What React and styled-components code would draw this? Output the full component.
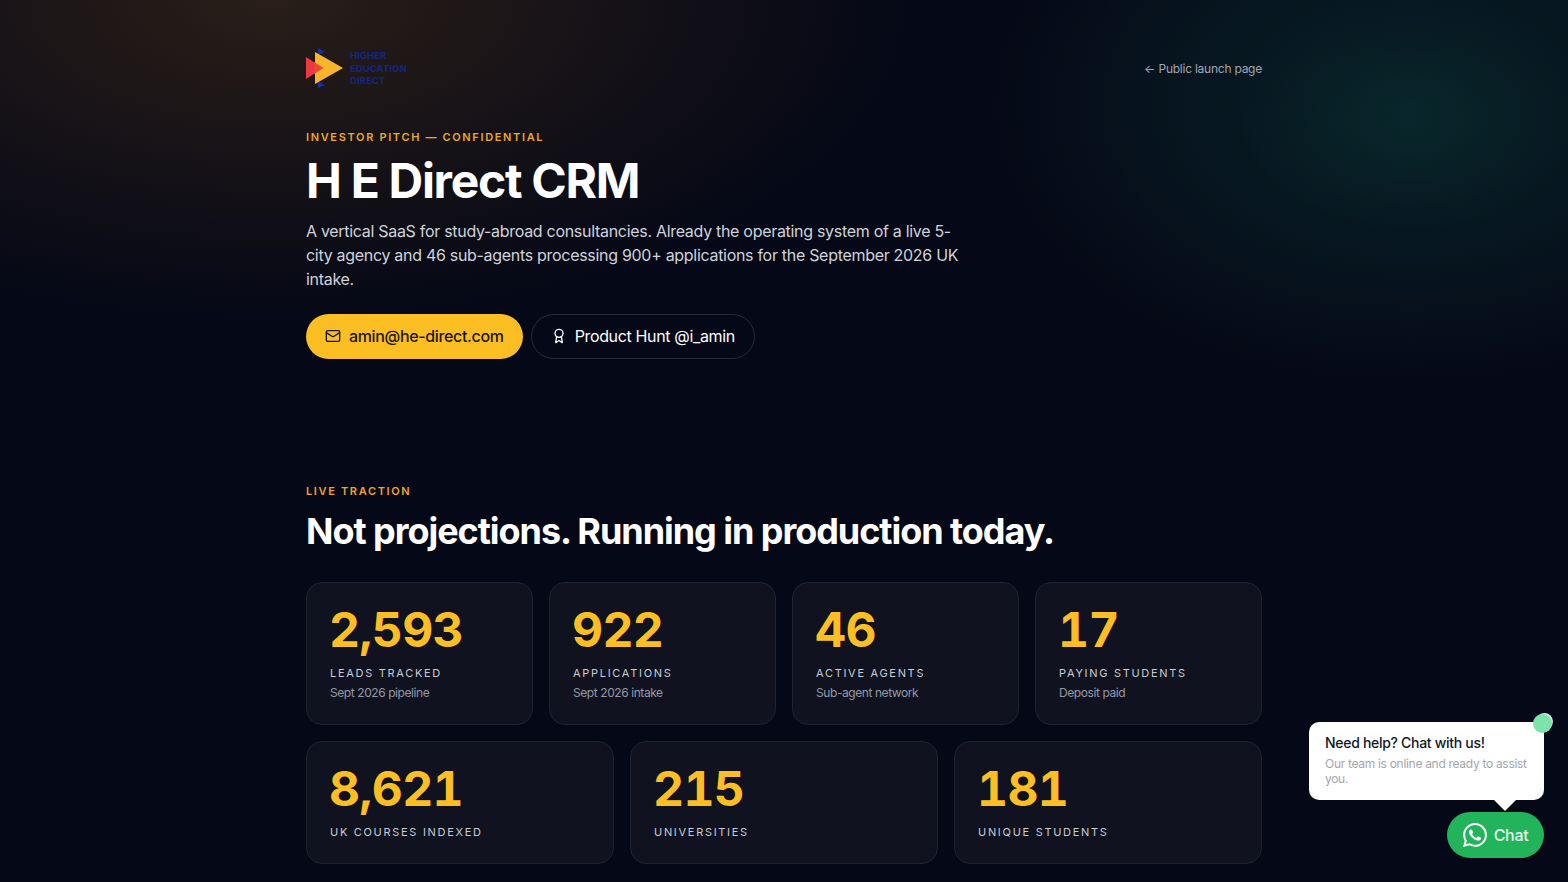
import React from "react";
import styled, { createGlobalStyle } from "styled-components";
import { Mail, Award } from "lucide-react";

const Global = createGlobalStyle`
  html, body { margin: 0; padding: 0; height: 882px; overflow: hidden; background: #050816; }
  * { box-sizing: border-box; }
  body { font-family: Inter, "Liberation Sans", sans-serif; color: #fff; letter-spacing: -0.3px; }
`;

const Page = styled.div`
  position: relative;
  height: 882px;
  overflow: hidden;
  background:
    radial-gradient(ellipse 640px 320px at 270px 0px, rgba(140, 90, 30, 0.27), rgba(140, 90, 30, 0.13) 50%, rgba(140, 90, 30, 0) 100%),
    radial-gradient(ellipse 170px 110px at 1410px 125px, rgba(14, 110, 90, 0.1), rgba(14, 110, 90, 0) 100%),
    radial-gradient(ellipse 430px 285px at 1410px 105px, rgba(16, 105, 90, 0.24), rgba(16, 105, 90, 0.12) 60%, rgba(16, 105, 90, 0) 100%),
    #050816;
`;

const Container = styled.main`
  width: 1020px;
  margin: 0 auto;
  padding: 0 32px;
`;

const Header = styled.header`
  height: 130px;
  padding-top: 48px;
  display: flex;
  justify-content: space-between;
  align-items: flex-start;
`;

const Logo = styled.div`
  display: flex;
  align-items: center;
  gap: 6px;
  height: 40px;
`;

const LogoText = styled.div`
  font-size: 9.6px;
  line-height: 12.5px;
  font-weight: 700;
  letter-spacing: 0;
  color: #14267f;
  white-space: nowrap;
  padding-top: 2px;
`;

const BackLink = styled.a`
  font-size: 12px;
  line-height: 41px;
  letter-spacing: -0.24px;
  color: #a0a6b6;
`;

const Hero = styled.section`
  height: 354px;
`;

const Eyebrow = styled.div`
  font-size: 11px;
  line-height: 14px;
  font-weight: 600;
  letter-spacing: 1.65px;
  color: #eaa928;
`;

const Title = styled.h1`
  margin: 8px 0 0;
  font-size: 48px;
  line-height: 58px;
  font-weight: 700;
  letter-spacing: -1.3px;
  color: #fff;
`;

const Lead = styled.p`
  margin: 9px 0 0;
  width: 656px;
  font-size: 16px;
  line-height: 24px;
  color: #d0d3dc;
`;

const Actions = styled.div`
  display: flex;
  gap: 8px;
  margin-top: 22.5px;
`;

const Button = styled.a`
  display: flex;
  align-items: center;
  gap: 8px;
  height: 45px;
  padding: 0 19px 1px;
  border-radius: 23px;
  font-size: 16px;
  letter-spacing: -0.35px;
  font-weight: ${(p) => (p.$primary ? 500 : 400)};
  color: ${(p) => (p.$primary ? "#1b1508" : "#fff")};
  background: ${(p) => (p.$primary ? "#fbbf24" : "transparent")};
  border: ${(p) => (p.$primary ? "0" : "1px solid #262b3b")};
`;

const SectionLabel = styled.div`
  font-size: 11px;
  line-height: 14px;
  font-weight: 600;
  letter-spacing: 1.65px;
  color: #f0a32a;
`;

const SectionTitle = styled.h2`
  margin: 11px 0 0;
  font-size: 36px;
  line-height: 44px;
  font-weight: 700;
  letter-spacing: -1.05px;
  color: #fff;
`;

const Grid = styled.div`
  display: grid;
  grid-template-columns: repeat(${(p) => p.$cols}, 1fr);
  gap: 16px;
  margin-top: ${(p) => p.$top}px;
`;

const Card = styled.div`
  height: ${(p) => (p.$sub ? 143 : 123)}px;
  padding: 21px 23px 0;
  background: #10131f;
  border: 1px solid #1f2331;
  border-radius: 16px;
`;

const Value = styled.div`
  font-size: 48px;
  line-height: 52px;
  font-weight: 700;
  letter-spacing: -0.6px;
  font-variant-numeric: tabular-nums;
  color: #fbbf24;
  margin-left: -1px;
`;

const Label = styled.div`
  margin-top: 9px;
  font-size: 11px;
  line-height: 16px;
  letter-spacing: 1.7px;
  color: #c9ccd6;
`;

const Sub = styled.div`
  margin-top: 4px;
  font-size: 12px;
  line-height: 16px;
  letter-spacing: -0.42px;
  color: #9498a6;
`;

const Bubble = styled.div`
  position: absolute;
  left: 1309px;
  top: 722px;
  width: 235px;
  height: 78px;
  padding: 12px 16px;
  background: #fff;
  border-radius: 10px;
  &::after {
    content: "";
    position: absolute;
    right: 28px;
    bottom: -11px;
    border-left: 11px solid transparent;
    border-right: 11px solid transparent;
    border-top: 11px solid #fff;
  }
`;

const BubbleTitle = styled.div`
  font-size: 14px;
  line-height: 18px;
  font-weight: 500;
  color: #111827;
`;

const BubbleText = styled.div`
  margin-top: 4px;
  font-size: 12px;
  line-height: 15px;
  color: #a3a6ad;
`;

const Dot = styled.span`
  position: absolute;
  right: -8px;
  top: -8px;
  width: 19px;
  height: 19px;
  border-radius: 50%;
  background: #7ce3ad;
  box-shadow: 2px -2px 0 -1px #d6e6e0;
`;

const ChatButton = styled.a`
  position: absolute;
  left: 1447px;
  top: 812px;
  width: 97px;
  height: 46px;
  display: flex;
  align-items: center;
  justify-content: center;
  gap: 7px;
  background: #22b45b;
  border-radius: 23px;
  font-size: 16px;
  font-weight: 500;
  color: #e6f7ec;
`;

const LogoMark = () => (
  <svg width="38" height="42" viewBox="0 0 38 42" aria-hidden="true">
    <polygon points="12,1 19,5 12,8" fill="#1a2f9f" />
    <polygon points="12,34 19,38 12,41" fill="#1a2f9f" />
    <polygon points="9,5 37,21 9,37" fill="#f9b52c" />
    <polygon points="0,10 17,21 0,32" fill="#ee3844" />
    <polygon points="8,15 17,21 8,27" fill="#ec4a34" />
  </svg>
);

const WhatsApp = () => (
  <svg width="24" height="24" viewBox="0 0 24 24" fill="#fff" aria-hidden="true">
    <path d="M17.47 14.38c-.3-.15-1.76-.87-2.03-.97-.27-.1-.47-.15-.67.15-.2.3-.77.97-.94 1.17-.17.2-.35.22-.65.07-.3-.15-1.26-.46-2.39-1.48-.88-.79-1.48-1.76-1.65-2.06-.17-.3-.02-.46.13-.61.13-.13.3-.35.45-.52.15-.17.2-.3.3-.5.1-.2.05-.37-.02-.52-.08-.15-.67-1.61-.92-2.2-.24-.58-.49-.5-.67-.51h-.57c-.2 0-.52.07-.79.37-.27.3-1.04 1.02-1.04 2.48s1.07 2.88 1.21 3.07c.15.2 2.1 3.2 5.08 4.49.71.3 1.26.49 1.69.62.71.23 1.36.2 1.87.12.57-.08 1.76-.72 2-1.41.25-.7.25-1.29.18-1.41-.08-.13-.27-.2-.57-.35zM12.05 21.78h-.01a9.87 9.87 0 0 1-5.03-1.38l-.36-.21-3.74.98 1-3.65-.24-.37a9.86 9.86 0 0 1-1.51-5.26c0-5.45 4.44-9.88 9.89-9.88 2.64 0 5.12 1.03 6.99 2.9a9.83 9.83 0 0 1 2.89 6.99c0 5.45-4.44 9.88-9.88 9.88zM20.46 3.49A11.82 11.82 0 0 0 12.05 0C5.5 0 .16 5.34.16 11.89c0 2.1.55 4.14 1.59 5.95L.06 24l6.3-1.65a11.88 11.88 0 0 0 5.68 1.45h.01c6.55 0 11.89-5.34 11.89-11.9 0-3.18-1.24-6.16-3.48-8.41z" />
  </svg>
);

const topStats = [
  ["2,593", "LEADS TRACKED", "Sept 2026 pipeline"],
  ["922", "APPLICATIONS", "Sept 2026 intake"],
  ["46", "ACTIVE AGENTS", "Sub-agent network"],
  ["17", "PAYING STUDENTS", "Deposit paid"],
];

const bottomStats = [
  ["8,621", "UK COURSES INDEXED"],
  ["215", "UNIVERSITIES"],
  ["181", "UNIQUE STUDENTS"],
];

const Stat = ({ value, label, sub }) => (
  <Card $sub={!!sub}>
    <Value>{value}</Value>
    <Label>{label}</Label>
    {sub && <Sub>{sub}</Sub>}
  </Card>
);

export default function App() {
  return (
    <Page>
      <Global />
      <Container>
        <Header>
          <Logo>
            <LogoMark />
            <LogoText>
              HIGHER
              <br />
              EDUCATION
              <br />
              DIRECT
            </LogoText>
          </Logo>
          <BackLink>← Public launch page</BackLink>
        </Header>
        <Hero>
          <Eyebrow>INVESTOR PITCH — CONFIDENTIAL</Eyebrow>
          <Title>H E Direct CRM</Title>
          <Lead>
            A vertical SaaS for study-abroad consultancies. Already the operating system of a live 5-city agency and 46
            sub-agents processing 900+ applications for the September 2026 UK intake.
          </Lead>
          <Actions>
            <Button $primary>
              <Mail size={16} strokeWidth={2} />
              amin@he-direct.com
            </Button>
            <Button>
              <Award size={16} strokeWidth={2} />
              Product Hunt @i_amin
            </Button>
          </Actions>
        </Hero>
        <SectionLabel>LIVE TRACTION</SectionLabel>
        <SectionTitle>Not projections. Running in production today.</SectionTitle>
        <Grid $cols={4} $top={29}>
          {topStats.map(([v, l, s]) => (
            <Stat key={l} value={v} label={l} sub={s} />
          ))}
        </Grid>
        <Grid $cols={3} $top={16}>
          {bottomStats.map(([v, l]) => (
            <Stat key={l} value={v} label={l} />
          ))}
        </Grid>
      </Container>
      <Bubble>
        <Dot />
        <BubbleTitle>Need help? Chat with us!</BubbleTitle>
        <BubbleText>Our team is online and ready to assist you.</BubbleText>
      </Bubble>
      <ChatButton>
        <WhatsApp />
        Chat
      </ChatButton>
    </Page>
  );
}
